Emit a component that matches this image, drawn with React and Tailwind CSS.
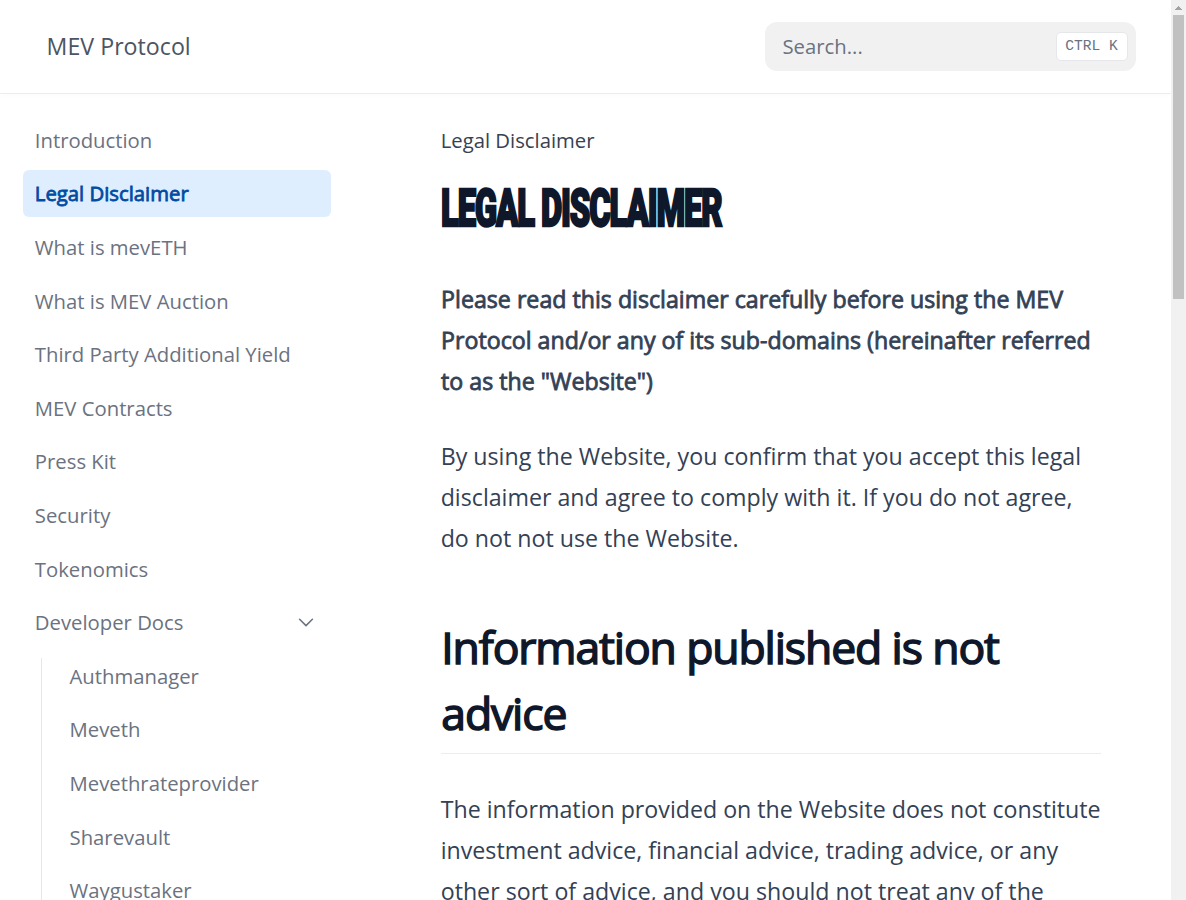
import React from "react";

const pages = [
  "Introduction",
  "Legal Disclaimer",
  "What is mevETH",
  "What is MEV Auction",
  "Third Party Additional Yield",
  "MEV Contracts",
  "Press Kit",
  "Security",
  "Tokenomics",
];
const devPages = ["Authmanager", "Meveth", "Mevethrateprovider", "Sharevault", "Waygustaker"];

function NavItem({ label, active }) {
  return (
    <li
      className={
        active
          ? "flex h-[46.66px] items-center rounded-md bg-[#dfeeff] px-[11.66px] pt-[0.6px] text-[#004ca3] [-webkit-text-stroke:0.8px_#004ca3]"
          : "flex h-[46.66px] items-center rounded-md px-[11.66px] pt-[0.6px]"
      }
    >
      {label}
    </li>
  );
}

function Header() {
  return (
    <header className="flex h-[93.3px] shrink-0 items-center justify-between pl-[46.6px] pr-[35px] shadow-[0_2px_4px_rgba(0,0,0,0.02),0_1px_0_rgba(0,0,0,0.06)]">
      <span className="text-[23.2px] leading-[35px] text-[#4b5563]">MEV Protocol</span>
      <div className="flex h-[49px] w-[371px] items-center justify-between rounded-xl bg-[#f1f1f1] pl-[17.5px] pr-2 text-[20.3px] text-[#6b7280]">
        <span>Search...</span>
        <kbd className="mb-px flex h-[29px] w-[72px] items-center justify-center whitespace-pre rounded-[5px] border border-gray-200 bg-white pr-px font-['Liberation_Mono',monospace] text-[14.6px] leading-[22px]">
          CTRL K
        </kbd>
      </div>
    </header>
  );
}

function Sidebar() {
  return (
    <aside className="w-[354px] shrink-0 px-[23.2px] pt-[23.55px] text-[20.3px] leading-[29.16px] text-[#6b7280]">
      <ul className="flex flex-col gap-[6.93px]">
        {pages.map((p) => (
          <NavItem key={p} label={p} active={p === "Legal Disclaimer"} />
        ))}
        <li className="flex h-[46.66px] items-center justify-between pl-[11.66px] pr-[14px]">
          <span className="pt-[0.6px]">Developer Docs</span>
          <svg className="mb-[1px] size-[22px]" viewBox="0 0 24 24" fill="none" stroke="currentColor" strokeWidth="1.7" strokeLinecap="round" strokeLinejoin="round">
            <path d="M5 9l7 7 7-7" />
          </svg>
        </li>
      </ul>
      <div className="ml-[17.5px] mt-[12.4px] flow-root border-l border-gray-200 pl-[16.2px]">
        <ul className="-mt-[5.3px] flex flex-col gap-[6.93px]">
          {devPages.map((p) => (
            <NavItem key={p} label={p} />
          ))}
        </ul>
      </div>
    </aside>
  );
}

function Article() {
  return (
    <article className="ml-[86.7px] w-[660px] shrink-0 pt-[32.6px] text-[23.2px] leading-[40.75px] text-[#334155]">
      <div className="text-[20.3px] leading-[29.16px] text-[#374151]">Legal Disclaimer</div>
      <h1 className="mt-[11.8px] h-[84px] whitespace-nowrap text-[#0f172a]">
        <span className="inline-block origin-left scale-x-[0.637] font-['Roboto',sans-serif] text-[51.5px] font-black uppercase leading-[84px] tracking-[-1.8px] [-webkit-text-stroke:2.4px_#0f172a]">
          Legal Disclaimer
        </span>
      </h1>
      <p className="mt-[28.3px] whitespace-nowrap pl-[0.4px] [-webkit-text-stroke:0.8px_#334155]">
        Please read this disclaimer carefully before using the MEV
        <br />
        Protocol and/or any of its sub-domains (hereinafter referred
        <br />
        to as the "Website")
      </p>
      <p className="mt-[34.8px] whitespace-nowrap">
        By using the Website, you confirm that you accept this legal
        <br />
        disclaimer and agree to comply with it. If you do not agree,
        <br />
        do not not use the Website.
      </p>
      <h2 className="mt-[55.7px] h-[140px] border-b border-neutral-200/70 pl-[0.6px] text-[44.5px] leading-[66px] tracking-[-0.025em] text-[#0f172a] [-webkit-text-stroke:1.5px_#0f172a]">
        Information published is not
        <br />
        advice
      </h2>
      <p className="mt-[35px] whitespace-nowrap">
        The information provided on the Website does not constitute
        <br />
        investment advice, financial advice, trading advice, or any
        <br />
        other sort of advice, and you should not treat any of the
      </p>
    </article>
  );
}

function Scrollbar() {
  return (
    <div className="flex w-[15px] shrink-0 flex-col items-center bg-[#f1f1f1]">
      <div className="flex h-[15px] items-end justify-center pb-[5px]">
        <svg width="7" height="4" viewBox="0 0 7 4" fill="#a3a3a3" shapeRendering="crispEdges">
          <path d="M3 0h1v1h1v1h1v1h1v1H0V3h1V2h1V1h1z" />
        </svg>
      </div>
      <div className="h-[284px] w-[11px] bg-[#c1c1c1]" />
    </div>
  );
}

export default function App() {
  return (
    <div className="flex h-[900px] w-[1186px] overflow-hidden bg-white font-['Open_Sans',sans-serif]">
      <div className="flex w-[1171px] flex-col overflow-hidden">
        <Header />
        <div className="flex min-h-0 flex-1">
          <Sidebar />
          <Article />
        </div>
      </div>
      <Scrollbar />
    </div>
  );
}
